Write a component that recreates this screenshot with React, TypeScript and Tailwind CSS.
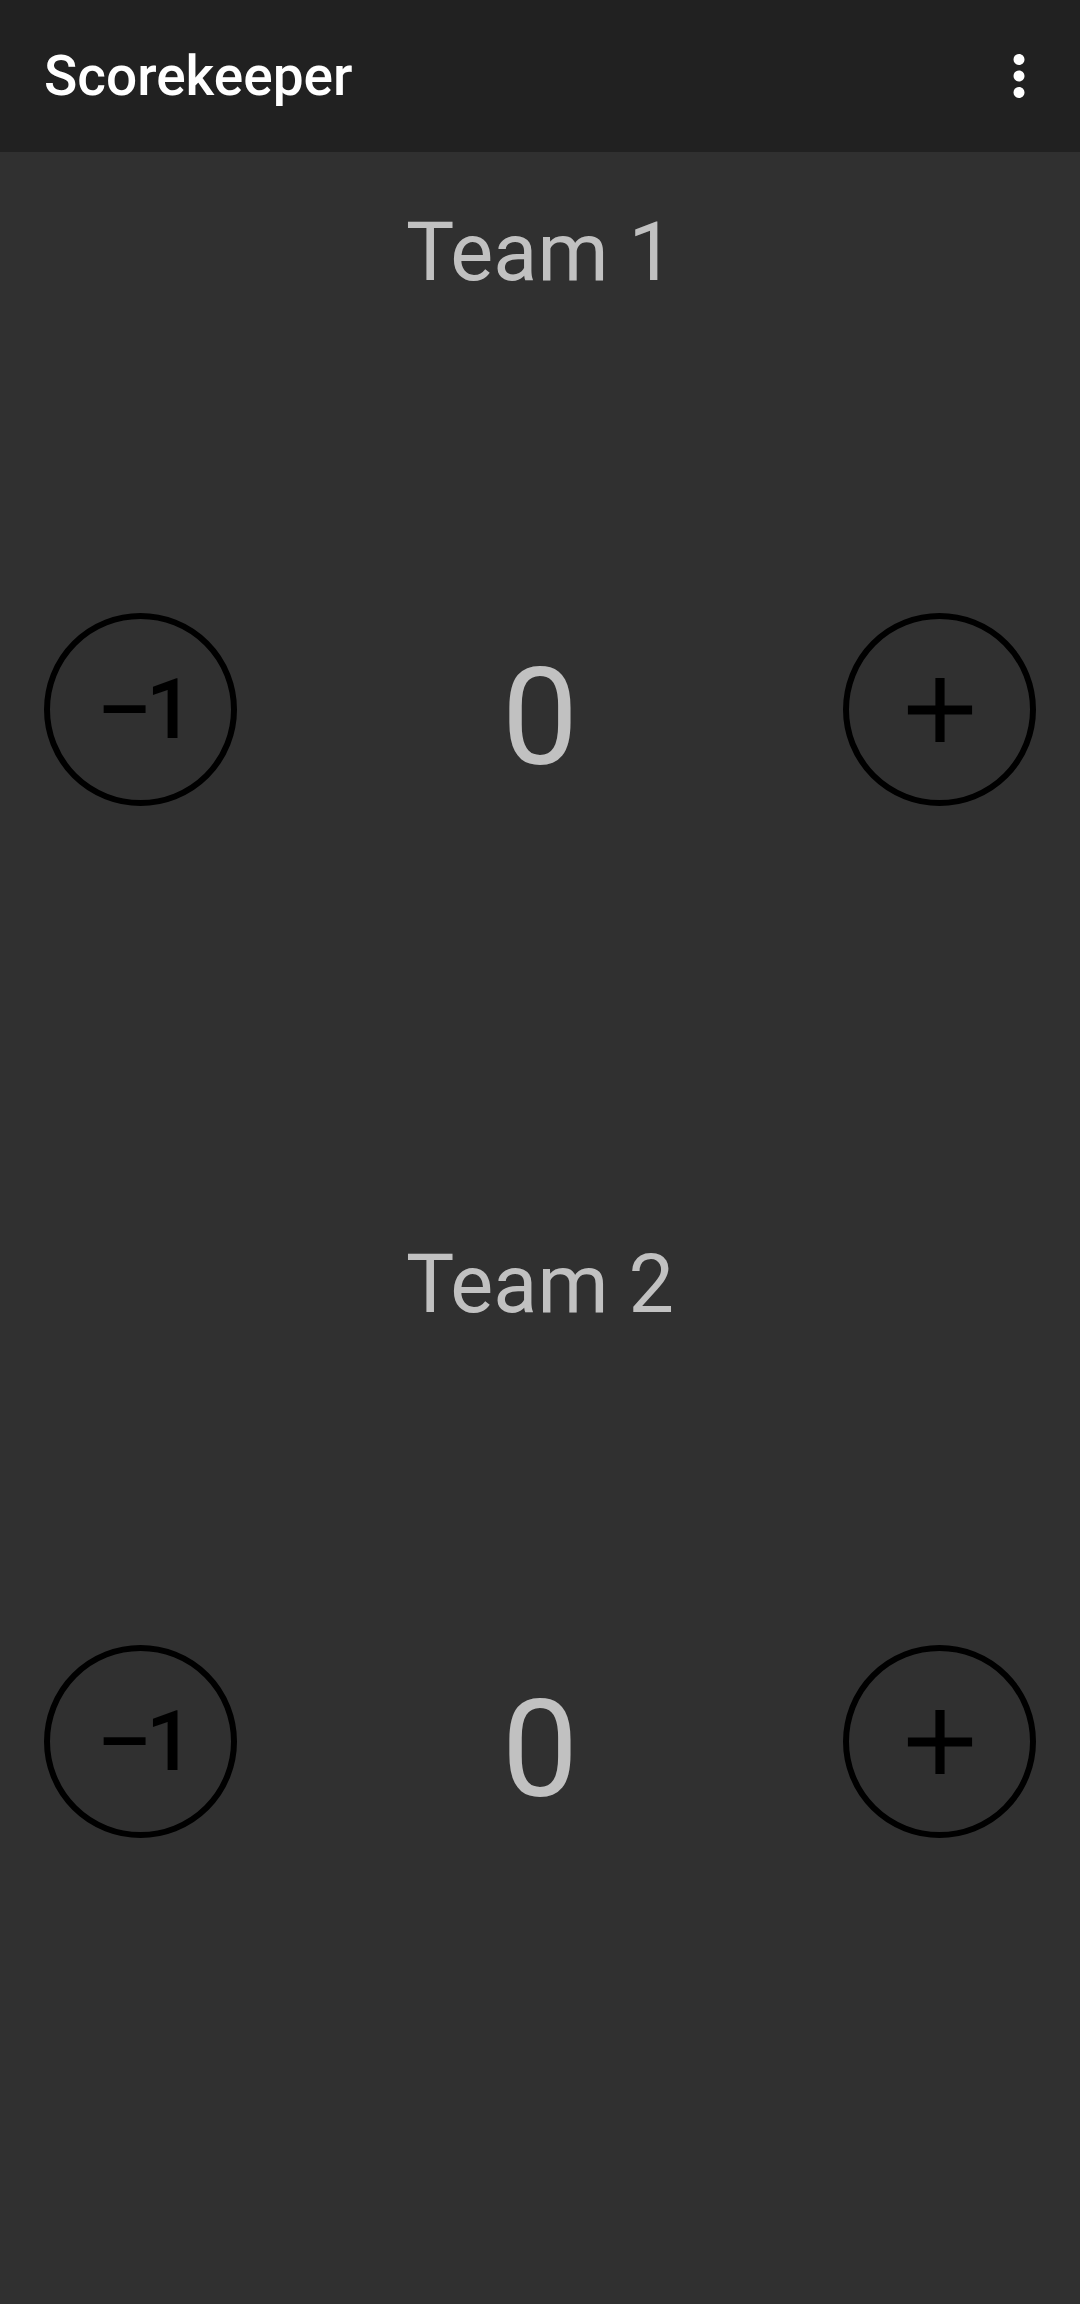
import React from "react";

function Counter({ team }: { team: string }) {
  return (
    <div className="flex h-[1032px] flex-col pt-[52px]">
      <div className="h-[97px] text-center text-[81px] leading-[97px] text-[#c1c1c1]">{team}</div>
      <div className="mt-[312px] flex h-[193px] items-center justify-between px-[44px]">
        <div className="flex h-[193px] w-[193px] items-center justify-center rounded-full border-[6px] border-black">
          <span className="pl-[5px] text-[84px] font-medium leading-none tracking-[-5px] text-black">–1</span>
        </div>
        <div className="mt-[17px] text-[136px] leading-none text-[#c1c1c1]">0</div>
        <div className="flex h-[193px] w-[193px] items-center justify-center rounded-full border-[6px] border-black">
          <svg width="110" height="110" viewBox="0 0 24 24" fill="black">
            <path d="M19 13h-6v6h-2v-6H5v-2h6V5h2v6h6v2z" />
          </svg>
        </div>
      </div>
    </div>
  );
}

export default function App() {
  return (
    <div className="min-h-[2304px] bg-[#303030]" style={{ fontFamily: "Roboto, 'Noto Sans', sans-serif" }}>
      <div className="flex h-[152px] items-center justify-between bg-[#212121] pl-[44px] pr-[20px]">
        <div className="text-[55px] font-medium text-white">Scorekeeper</div>
        <svg width="66" height="66" viewBox="0 0 24 24" fill="white" className="mr-[8px]">
          <path d="M12 8c1.1 0 2-.9 2-2s-.9-2-2-2-2 .9-2 2 .9 2 2 2zm0 2c-1.1 0-2 .9-2 2s.9 2 2 2 2-.9 2-2-.9-2-2-2zm0 6c-1.1 0-2 .9-2 2s.9 2 2 2 2-.9 2-2-.9-2-2-2z" />
        </svg>
      </div>
      <Counter team="Team 1" />
      <Counter team="Team 2" />
    </div>
  );
}
